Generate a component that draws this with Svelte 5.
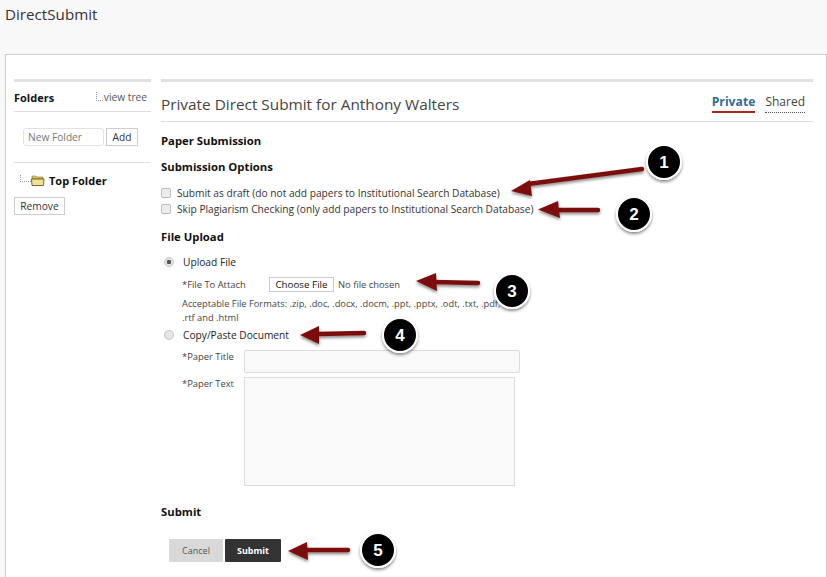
<script>
    const arrows = [
        { d: 'M642 169 L528 184', head: 'M511 191 L530 180 L532 196 Z' },
        { d: 'M598 210 L556 210', head: 'M538 209.500 L558 201 L560 218 Z' },
        { d: 'M478 283 L434 282', head: 'M416 281 L436 273 L437 291 Z' },
        { d: 'M364 333 L318 334', head: 'M300 335 L319 326 L319 344 Z' },
        { d: 'M348 550 L306 550', head: 'M288 551 L307 542 L308 560 Z' }
    ];
    const badges = [
        { n: 1, x: 664, y: 162 },
        { n: 2, x: 634, y: 214 },
        { n: 3, x: 512, y: 291 },
        { n: 4, x: 400, y: 335 },
        { n: 5, x: 378, y: 550 }
    ];
</script>

<div class="page">
    <header class="top">DirectSubmit</header>

    <div class="panel">
        <aside class="side">
            <div class="side-head">
                <strong>Folders</strong>
                <span class="tree-link"><i class="dots"></i>view tree</span>
            </div>
            <div class="new-folder">
                <input type="text" placeholder="New Folder" />
                <button class="plain">Add</button>
            </div>
            <div class="tree">
                <i class="dots wide"></i>
                <svg width="14" height="11" viewBox="0 0 14 11">
                    <path d="M1 2 L1 1 L5 1 L6 2 L12 2 L12 4 L1 4 Z" fill="#d9c55c" stroke="#8a7a30" stroke-width=".6" />
                    <path d="M.5 4 L13 4 L12.500 10.500 L1 10.500 Z" fill="#f3e28a" stroke="#4d4a2c" stroke-width=".8" />
                </svg>
                <strong>Top Folder</strong>
            </div>
            <button class="plain remove">Remove</button>
        </aside>

        <main class="content">
            <div class="title-row">
                <h1>Private Direct Submit for Anthony Walters</h1>
                <nav class="tabs">
                    <span class="tab active">Private</span>
                    <span class="tab">Shared</span>
                </nav>
            </div>

            <h2 class="paper">Paper Submission</h2>
            <h2 class="options">Submission Options</h2>
            <label class="check"><input type="checkbox" />Submit as draft (do not add papers to Institutional Search Database)</label>
            <label class="check"><input type="checkbox" />Skip Plagiarism Checking (only add papers to Institutional Search Database)</label>

            <h2 class="upload">File Upload</h2>
            <label class="radio first"><input type="radio" name="mode" checked />Upload File</label>
            <div class="indent">
                <div class="file-row">
                    <span class="field-label">*File To Attach</span>
                    <span class="file-btn">Choose File</span>
                    <span>No file chosen</span>
                </div>
                <p class="formats">Acceptable File Formats: .zip, .doc, .docx, .docm, .ppt, .pptx, .odt, .txt, .pdf, .rtf and .html</p>
            </div>
            <label class="radio copy"><input type="radio" name="mode" />Copy/Paste Document</label>
            <div class="indent">
                <div class="paste-row">
                    <span class="paste-label">*Paper Title</span>
                    <input class="title-input" type="text" />
                </div>
                <div class="paste-row text-row">
                    <span class="paste-label">*Paper Text</span>
                    <textarea></textarea>
                </div>
            </div>

            <h2 class="submit-head">Submit</h2>
            <div class="actions">
                <button class="cancel">Cancel</button>
                <button class="submit">Submit</button>
            </div>
        </main>
    </div>

    <svg class="marks" width="827" height="577" viewBox="0 0 827 577">
        <defs>
            <filter id="soft" x="-30%" y="-30%" width="160%" height="160%">
                <feDropShadow dx="0" dy="2" stdDeviation="1.500" flood-color="#000" flood-opacity=".45" />
            </filter>
        </defs>
        {#each arrows as a}
            <g filter="url(#soft)">
                <path d={a.d} stroke="#7c0f10" stroke-width="4.500" stroke-linecap="round" fill="none" />
                <path d={a.head} fill="#7c0f10" />
            </g>
        {/each}
        {#each badges as b}
            <g filter="url(#soft)">
                <circle cx={b.x} cy={b.y} r="17" fill="#000" stroke="#fff" stroke-width="2" />
            </g>
            <text x={b.x} y={b.y + 6} text-anchor="middle">{b.n}</text>
        {/each}
    </svg>
</div>

<style>
    :global(body) {
        margin: 0;
        background: #fff;
    }

    .page {
        position: relative;
        width: 827px;
        height: 577px;
        overflow: hidden;
        background: #f8f8f8;
        color: #333;
        font-family: "Open Sans", sans-serif;
        font-size: 10.200px;
    }

    .top {
        height: 54px;
        padding: 4px 0 0 5px;
        box-sizing: border-box;
        font-size: 15.200px;
        line-height: 20px;
    }

    .panel {
        display: flex;
        gap: 10px;
        height: 540px;
        margin-left: 5px;
        padding: 24px 13px 0 8px;
        box-sizing: border-box;
        border: 1px solid #ccc;
        background: #fff;
    }

    .side {
        width: 137px;
        flex: none;
        border-top: 3px solid #e1e1e1;
    }

    .side-head {
        display: flex;
        justify-content: space-between;
        align-items: center;
        height: 30px;
        padding: 2px 4px 0 0;
        box-sizing: border-box;
        border-bottom: 1px solid #ddd;
    }

    .side-head strong {
        font-size: 11px;
        color: #111;
    }

    .tree-link {
        display: flex;
        align-items: center;
        margin-top: -2px;
        color: #555;
        font-size: 10.200px;
    }

    .dots {
        display: inline-block;
        width: 6px;
        height: 8px;
        margin-right: 1px;
        border-left: 1px dotted #999;
        border-bottom: 1px dotted #999;
    }

    .new-folder {
        display: flex;
        gap: 2px;
        height: 51px;
        padding: 16px 0 0 9px;
        box-sizing: border-box;
        border-bottom: 1px solid #ddd;
    }

    .new-folder input {
        width: 81px;
        height: 18px;
        padding: 0 4px;
        box-sizing: border-box;
        border: 1px solid #e2e2e2;
        border-radius: 3px;
        font: inherit;
    }

    .new-folder input::placeholder {
        color: #777;
    }

    .plain {
        height: 18px;
        padding: 0 5px;
        border: 1px solid #ccc;
        border-radius: 0;
        background: #fff;
        color: #333;
        font: inherit;
        line-height: 14px;
    }

    .new-folder .plain {
        width: 32px;
        padding: 0;
    }

    .tree {
        display: flex;
        align-items: center;
        height: 17px;
        margin-top: 9px;
        padding-left: 6px;
        color: #111;
    }

    .dots.wide {
        width: 10px;
        height: 6px;
        margin: -4px 0 0 0;
    }

    .tree strong {
        margin-left: 4px;
        font-size: 11px;
    }

    .remove {
        display: block;
        width: 51px;
        margin-top: 8px;
        padding: 0;
    }

    .content {
        flex: 1;
        border-top: 3px solid #e1e1e1;
    }

    .title-row {
        display: flex;
        justify-content: space-between;
        height: 40px;
        box-sizing: border-box;
        border-bottom: 1px solid #ddd;
    }

    h1 {
        margin: 11px 0 0;
        font-size: 15.350px;
        font-weight: 400;
        line-height: 22px;
        color: #444;
    }

    .tabs {
        display: flex;
        align-items: flex-start;
        gap: 10px;
        padding: 12px 8px 0 0;
    }

    .tab {
        height: 19px;
        box-sizing: border-box;
        font-size: 12px;
        line-height: 16px;
        border-bottom: 1px dotted #555;
        color: #444;
    }

    .tab.active {
        border-bottom: 2px solid #a5281b;
        font-size: 12.200px;
        font-weight: 700;
        color: #336b94;
    }

    h2 {
        margin: 0;
        font-size: 11.300px;
        font-weight: 700;
        line-height: 14px;
        color: #111;
    }

    .paper {
        margin-top: 12px;
    }

    .options {
        margin: 12px 0 11px;
    }

    .check {
        display: flex;
        align-items: center;
        height: 16px;
    }

    .check input {
        appearance: none;
        width: 10px;
        height: 10px;
        margin: 0 6px 0 0;
        box-sizing: border-box;
        border: 1px solid #bbb;
        border-radius: 2px;
        background: #ececec;
    }

    .upload {
        margin: 13px 0 10px;
    }

    .radio {
        display: flex;
        align-items: center;
        height: 16px;
        color: #222;
    }

    .radio.copy {
        margin-top: 2px;
    }

    .radio input {
        appearance: none;
        width: 10px;
        height: 10px;
        margin: 0 9px 0 3px;
        box-sizing: border-box;
        border: 1px solid #c4c4c4;
        border-radius: 50%;
        background: #e6e6e6;
    }

    .radio input:checked {
        background: radial-gradient(circle, #555 0 2px, #e6e6e6 2.500px);
    }

    .indent {
        padding-left: 21px;
        font-size: 9.400px;
        color: #444;
    }

    .file-row {
        display: flex;
        align-items: center;
        gap: 4px;
        height: 16px;
        margin-top: 6px;
    }

    .field-label {
        width: 83px;
    }

    .file-btn {
        width: 65px;
        box-sizing: border-box;
        border: 1px solid #ccc;
        font-size: 9.800px;
        line-height: 13px;
        text-align: center;
        color: #111;
    }

    .formats {
        width: 322px;
        margin: 5px 0 0;
        font-size: 9.300px;
        line-height: 14px;
    }

    .paste-row {
        display: flex;
        margin-top: 7px;
    }

    .paste-label {
        width: 62px;
        line-height: 14px;
        padding-top: 0;
    }

    .title-input {
        width: 276px;
        height: 23px;
        padding: 0;
        box-sizing: border-box;
        border: 1px solid #ddd;
        border-radius: 2px;
        background: #f9f9f9;
    }

    .text-row {
        margin-top: 4px;
    }

    textarea {
        width: 271px;
        height: 109px;
        padding: 0;
        box-sizing: border-box;
        border: 1px solid #ddd;
        background: #f9f9f9;
        resize: none;
    }

    .submit-head {
        margin-top: 19px;
    }

    .actions {
        display: flex;
        gap: 2px;
        margin: 20px 0 0 8px;
    }

    .actions button {
        height: 23px;
        padding: 0;
        border: none;
        border-radius: 1px;
        font: inherit;
        font-size: 9px;
    }

    .actions .cancel {
        width: 54px;
        background: #d9d9d9;
        color: #555;
    }

    .actions .submit {
        width: 56px;
        background: #333;
        color: #fff;
        font-weight: 700;
    }

    .marks {
        position: absolute;
        left: 0;
        top: 0;
        pointer-events: none;
    }

    .marks text {
        fill: #fff;
        font-family: "Liberation Sans", sans-serif;
        font-size: 17px;
        font-weight: 700;
    }
</style>
